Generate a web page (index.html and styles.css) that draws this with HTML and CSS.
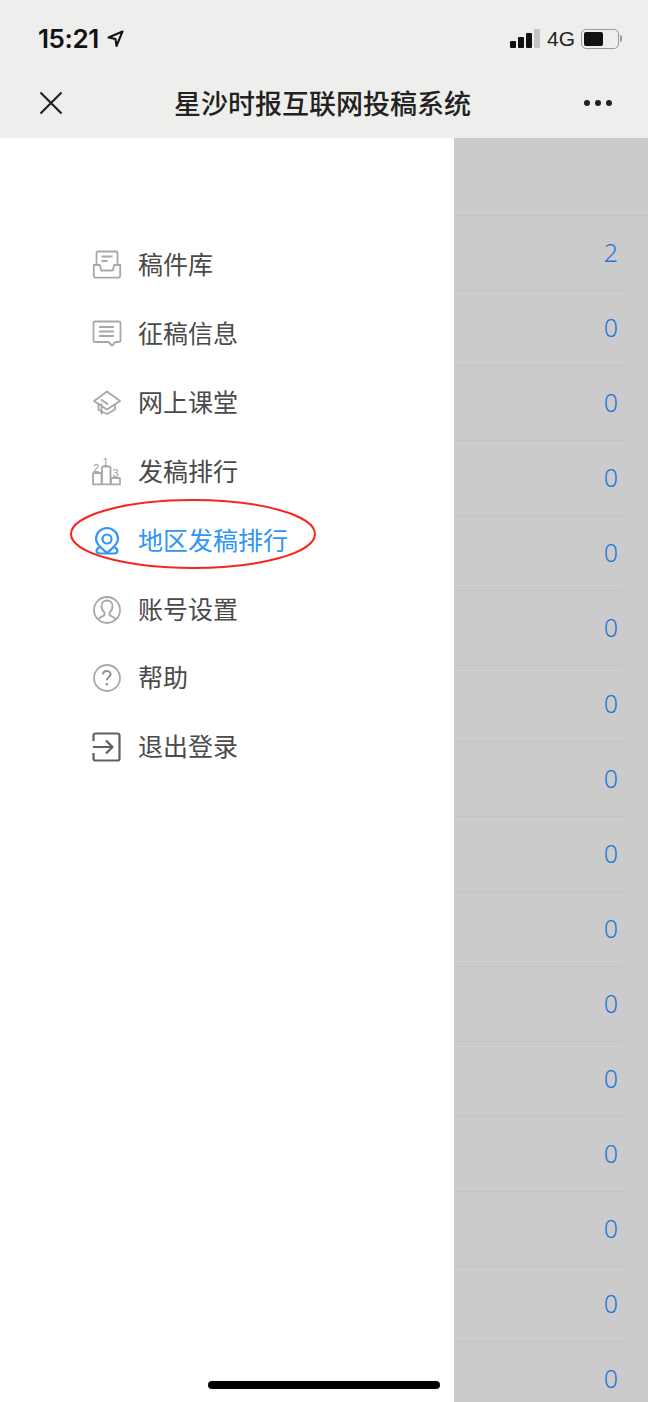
FILE: index.html
```html
<!DOCTYPE html>
<html lang="zh-CN">
<head>
    <meta charset="UTF-8">
    <title>星沙时报互联网投稿系统</title>
    <link rel="stylesheet" href="styles.css">
</head>
<body>
    <div class="screen">
        <div class="top-bar">
            <div class="status-bar">
                <div class="status-left">
                    <span class="time">15:21</span>
                    <svg class="arrow" width="17" height="17" viewBox="0 0 17 17"><path d="M15.500 1.500 1.500 7.500l7 1.500 1 7z" fill="none" stroke="#111" stroke-width="2" stroke-linejoin="round"/></svg>
                </div>
                <div class="status-right">
                    <div class="signal">
                        <i class="bar bar1"></i><i class="bar bar2"></i><i class="bar bar3"></i><i class="bar bar4"></i>
                    </div>
                    <span class="net">4G</span>
                    <div class="battery"><i class="level"></i></div>
                    <i class="battery-tip"></i>
                </div>
            </div>
            <div class="nav-bar">
                <svg class="close" width="24" height="24" viewBox="0 0 24 24"><path d="M1.500 1.500 22.500 22.500M22.500 1.500 1.500 22.500" stroke="#222" stroke-width="2.200" fill="none"/></svg>
                <div class="nav-title">星沙时报互联网投稿系统</div>
                <div class="more"><i></i><i></i><i></i></div>
            </div>
        </div>

        <div class="main">
            <div class="drawer">
                <ul class="menu">
                    <li class="menu-item">
                        <svg class="icon" viewBox="0 0 30 30"><path d="M4.500 15V3a1.500 1.500 0 0 1 1.500-1.500h18A1.500 1.500 0 0 1 25.500 3v12M9.500 6.500h11M9.500 11h6M1.800 15h6l1.500 5.500h11.400l1.500-5.500h6v10.500a2.200 2.200 0 0 1-2.200 2.200H4a2.200 2.200 0 0 1-2.200-2.200z"/></svg>
                        <span>稿件库</span>
                    </li>
                    <li class="menu-item">
                        <svg class="icon" viewBox="0 0 30 30"><path d="M3 2.500h24a1.500 1.500 0 0 1 1.500 1.500v17.500a1.500 1.500 0 0 1-1.500 1.500h-3.500l-3.500 3.500-3.500-3.500H3a1.500 1.500 0 0 1-1.500-1.500V4A1.500 1.500 0 0 1 3 2.500zM7 8h15M7 12.500h15M7 17h15"/></svg>
                        <span>征稿信息</span>
                    </li>
                    <li class="menu-item">
                        <svg class="icon" viewBox="0 0 30 30"><path d="M15 3.500 28 13 15 21.500 2 13zM6.500 16.500v5.500L15 26l8-4.500v-5M9 11.500l7 5M9.500 15.500v11"/></svg>
                        <span>网上课堂</span>
                    </li>
                    <li class="menu-item">
                        <svg class="icon" viewBox="0 0 30 30">
                            <path d="M1 27.300V17a1 1 0 0 1 1-1h7.500v11.300zM10 27.300V10.700a1 1 0 0 1 1-1h6.500a1 1 0 0 1 1 1v16.600zM19 21h8a1 1 0 0 1 1 1v5.300h-9z"/>
                            <text class="rank" x="1" y="14.500">2</text>
                            <text class="rank" x="10.500" y="8.500">1</text>
                            <text class="rank" x="20.500" y="19.500">3</text>
                        </svg>
                        <span>发稿排行</span>
                    </li>
                    <li class="menu-item active">
                        <svg class="icon" viewBox="0 0 30 30"><path d="M15 27C11 23 4 19 4 13a11 11 0 0 1 22 0c0 6-7 10-11 14z"/><circle cx="15" cy="13" r="4.500"/><path d="M7.500 21.500C3.500 23 3.500 27.500 8 27.500h14c4.500 0 4.500-4.500.5-6"/></svg>
                        <span>地区发稿排行</span>
                    </li>
                    <li class="menu-item">
                        <svg class="icon" viewBox="0 0 30 30"><circle cx="15" cy="15" r="13"/><path d="M6 25c1-3 5-3.500 6.500-5v-2.500C10.500 16 9.500 13.500 9.500 11c0-3.500 2.500-5.500 5.500-5.500s5.500 2 5.500 5.500c0 2.500-1 5-3 6.500V20c1.500 1.500 5.500 2 6.500 5"/></svg>
                        <span>账号设置</span>
                    </li>
                    <li class="menu-item">
                        <svg class="icon" viewBox="0 0 30 30"><circle cx="15" cy="15" r="13"/><path class="help-mark" d="M11 11.500C11 9.200 12.800 8 14.800 8s3.800 1.300 3.800 3.300c0 2.800-3.800 3-3.800 6"/><circle class="dot" cx="14.800" cy="21.300" r="1.300"/></svg>
                        <span>帮助</span>
                    </li>
                    <li class="menu-item exit">
                        <svg class="icon" viewBox="0 0 30 30"><path d="M1.500 9V3.500a2 2 0 0 1 2-2h22a2 2 0 0 1 2 2v23a2 2 0 0 1-2 2h-22a2 2 0 0 1-2-2V21M1 15h19.500M14 8.500l6.500 6.500-6.500 6.500"/></svg>
                        <span>退出登录</span>
                    </li>
                </ul>
            </div>

            <div class="side-panel">
                <div class="panel-head"></div>
                <div class="count-row">2</div>
                <div class="count-row">0</div>
                <div class="count-row">0</div>
                <div class="count-row">0</div>
                <div class="count-row">0</div>
                <div class="count-row">0</div>
                <div class="count-row">0</div>
                <div class="count-row">0</div>
                <div class="count-row">0</div>
                <div class="count-row">0</div>
                <div class="count-row">0</div>
                <div class="count-row">0</div>
                <div class="count-row">0</div>
                <div class="count-row">0</div>
                <div class="count-row">0</div>
                <div class="count-row">0</div>
            </div>
        </div>

        <!-- red hand-drawn mark over the menu item -->
        <svg class="mark" width="250" height="72" viewBox="0 0 250 72"><ellipse cx="125" cy="36" rx="122" ry="34" fill="none" stroke="#f5261c" stroke-width="2"/></svg>
        <div class="home-bar"></div>
    </div>
</body>
</html>
```

FILE: styles.css
```css
* {
    box-sizing: border-box;
}
html, body {
    margin: 0;
    padding: 0;
}
body {
    font-family: "Noto Sans CJK SC", "Noto Sans", sans-serif;
    background: white;
}
.screen {
    position: relative;
    width: 648px;
    height: 1402px;
    overflow: hidden;
}
.top-bar {
    background: #eeeeed;
    height: 138px;
}
.status-bar {
    height: 70px;
    display: flex;
    justify-content: space-between;
    align-items: center;
    padding: 7px 26px 0 38px;
}
.status-left {
    display: flex;
    align-items: center;
    gap: 8px;
}
.time {
    font-family: Inter, "Liberation Sans", sans-serif;
    font-size: 26px;
    font-weight: 600;
    letter-spacing: -0.4px;
    color: #111;
}
.status-right {
    display: flex;
    align-items: center;
}
.signal {
    display: flex;
    align-items: flex-end;
    gap: 2px;
    height: 19px;
}
.bar {
    width: 6px;
    background: #111;
    border-radius: 1px;
}
.bar1 { height: 7px; }
.bar2 { height: 11px; }
.bar3 { height: 15px; }
.bar4 { height: 19px; background: #c4c4c4; }
.net {
    font-family: "Liberation Sans", sans-serif;
    font-size: 21px;
    color: #222;
    margin: 0 6px 0 7px;
}
.battery {
    width: 38px;
    height: 20px;
    border: 1.500px solid #9a9a9a;
    border-radius: 5px;
    padding: 2px;
}
.level {
    display: block;
    width: 19px;
    height: 100%;
    background: #111;
    border-radius: 2px;
}
.battery-tip {
    width: 2px;
    height: 7px;
    margin-left: 1px;
    background: #9a9a9a;
    border-radius: 0 2px 2px 0;
}
.nav-bar {
    height: 68px;
    display: flex;
    align-items: center;
    justify-content: space-between;
    padding: 0 36px 2px 39px;
}
.nav-title {
    font-size: 27px;
    font-weight: 500;
    color: #222;
    margin-left: -2px;
    padding-bottom: 2px;
}
.more {
    display: flex;
    gap: 5px;
}
.more i {
    width: 6px;
    height: 6px;
    border-radius: 50%;
    background: #222;
}
.main {
    display: flex;
    height: 1264px;
}
.drawer {
    width: 454px;
    background: white;
    padding: 93px 0 0 92px;
}
.menu {
    list-style: none;
    margin: 0;
    padding: 0;
}
.menu-item {
    height: 68.850px;
    display: flex;
    align-items: center;
    gap: 16px;
    font-size: 25px;
    color: #4a4a4a;
}
.menu-item span {
    padding-bottom: 4px;
}
.icon {
    width: 30px;
    height: 30px;
    overflow: visible;
    fill: none;
    stroke: #a8a8a8;
    stroke-width: 1.800;
    stroke-linejoin: round;
}
.rank {
    font-family: "Liberation Sans", sans-serif;
    font-size: 11px;
    fill: #a0a0a0;
    stroke: none;
}
.help-mark {
    stroke: #909090;
    stroke-width: 2;
}
.dot {
    fill: #909090;
    stroke: none;
}
.active {
    color: #2f96f3;
}
.active .icon {
    stroke: #2f96f3;
    stroke-width: 2.200;
}
.exit .icon {
    stroke: #5f5f5f;
    stroke-width: 2.200;
}
.side-panel {
    flex: 1;
    background: #cbcbcb;
}
.panel-head {
    height: 78px;
    border-bottom: 1px solid #c2c2c2;
}
.count-row {
    height: 75.080px;
    margin-right: 25px;
    padding: 0 5px 2px 0;
    border-bottom: 1px solid #c2c2c2;
    display: flex;
    align-items: center;
    justify-content: flex-end;
    font-family: "Noto Sans", sans-serif;
    font-weight: 300;
    font-size: 25px;
    color: #1f78d8;
}
.mark {
    position: absolute;
    left: 68px;
    top: 498px;
}
.home-bar {
    position: absolute;
    left: 208px;
    top: 1381px;
    width: 232px;
    height: 8px;
    border-radius: 4px;
    background: black;
}
```
